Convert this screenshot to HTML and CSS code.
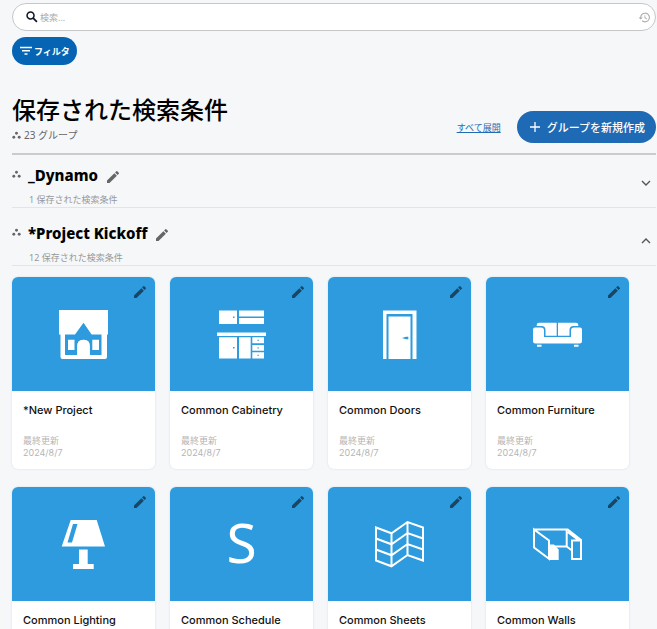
FILE: index.html
```html
<!DOCTYPE html>
<html lang="ja">
<head>
<meta charset="utf-8">
<meta name="viewport" content="width=device-width, initial-scale=1">
<title>保存された検索条件</title>
<link rel="stylesheet" href="styles.css">
</head>
<body>
<svg class="sprite" aria-hidden="true">
  <symbol id="pencil" viewBox="0 0 24 24"><path d="M3 17.25V21h3.75L17.81 9.94l-3.75-3.75L3 17.25zM20.71 7.04a1 1 0 0 0 0-1.41l-2.34-2.34a1 1 0 0 0-1.41 0l-1.83 1.83 3.75 3.75 1.83-1.83z"/></symbol>
  <symbol id="dots" viewBox="0 0 10 10"><circle cx="5" cy="2.5" r="1.6"/><circle cx="2" cy="7" r="1.6"/><circle cx="8" cy="7" r="1.6"/></symbol>
</svg>
<main class="page">
  <form class="search" role="search">
    <label for="query" aria-label="検索"><svg class="search-icon" viewBox="0 0 24 24"><circle cx="9.5" cy="9.5" r="6" fill="none" stroke="currentColor" stroke-width="2.6"/><path d="M14 14l6.5 6.5" stroke="currentColor" stroke-width="3"/></svg></label>
    <input id="query" type="text" placeholder="検索...">
    <button class="icon-button" type="button" aria-label="履歴"><svg class="history-icon" viewBox="0 0 24 24"><path d="M13 3a9 9 0 0 0-9 9H1l3.9 3.9L9 12H6a7 7 0 1 1 2.06 4.94l-1.42 1.42A9 9 0 1 0 13 3zm-1 5v5l4.3 2.5.7-1.2-3.5-2.1V8z"/></svg></button>
  </form>
  <button class="filter" type="button"><svg class="filter-icon" viewBox="0 0 12 10"><path d="M0 1.5h12M2 4.8h8M4.5 8h3" stroke="currentColor" stroke-width="1.5"/></svg>フィルタ</button>

  <header class="heading">
    <div>
      <h1>保存された検索条件</h1>
      <p class="count"><svg class="dots"><use href="#dots"/></svg>23 グループ</p>
    </div>
    <div class="actions">
      <a class="expand" href="#groups">すべて展開</a>
      <button class="create" type="button"><svg class="plus" viewBox="0 0 10 10"><path d="M5 0v10M0 5h10" stroke="currentColor" stroke-width="1.3"/></svg>グループを新規作成</button>
    </div>
  </header>

  <div id="groups">
    <section class="group">
      <svg class="dots"><use href="#dots"/></svg>
      <div class="group-text">
        <div class="group-title"><h2>_Dynamo</h2><button class="icon-button" type="button" aria-label="編集"><svg class="pencil"><use href="#pencil"/></svg></button></div>
        <p>1 保存された検索条件</p>
      </div>
      <button class="icon-button toggle" type="button" aria-expanded="false" aria-label="展開"><svg class="chevron" viewBox="0 0 10 6"><path d="M1 1l4 4 4-4"/></svg></button>
    </section>
    <section class="group">
      <svg class="dots"><use href="#dots"/></svg>
      <div class="group-text">
        <div class="group-title"><h2>*Project Kickoff</h2><button class="icon-button" type="button" aria-label="編集"><svg class="pencil"><use href="#pencil"/></svg></button></div>
        <p>12 保存された検索条件</p>
      </div>
      <button class="icon-button toggle" type="button" aria-expanded="true" aria-label="折りたたむ"><svg class="chevron" viewBox="0 0 10 6"><path d="M1 5l4-4 4 4"/></svg></button>
    </section>

    <div class="cards">
      <article class="card">
        <div class="cover">
          <button class="icon-button edit" type="button" aria-label="編集"><svg class="pencil"><use href="#pencil"/></svg></button>
          <svg class="art" viewBox="0 0 49 49"><path fill-rule="evenodd" d="M0 0h49v24.5h-1V47q0 2-2 2H3.500q-2 0-2-2V24.500H0zM6 24.500V45h12.300V36q0-6.300 6.200-6.300t6.200 6.300v9H42.500V24.500H32.600L24.500 12.700 16 24.500z"/><path d="M18.300 44h12.400v5H18.300zM9 29.700h6.500V40H9zM33.300 29.700h6.700V40h-6.700z"/><path d="M18.300 45v-9q0-6.300 6.200-6.300t6.200 6.300v9z"/></svg>
        </div>
        <div class="info"><h3>*New Project</h3><p>最終更新</p><time datetime="2024-08-07">2024/8/7</time></div>
      </article>
      <article class="card">
        <div class="cover">
          <button class="icon-button edit" type="button" aria-label="編集"><svg class="pencil"><use href="#pencil"/></svg></button>
          <svg class="art" viewBox="0 0 49 49"><path d="M2 .5h18V14H2zM22 .5h25v6H22zM22 8h25v6H22zM0 22.500h49V26H0zM2 27.200h18v21.300H2zM22 27.200h11.700v21.300H22zM35.300 27.200H47v6.100H35.300zM35.300 35H47v5.700H35.300zM35.300 42.300H47v6.200H35.300z"/><path class="cut" d="M16 6.500h1.500V8H16zM16 37h1.500v1.500H16zM40.500 29.800h1.200V31h-1.200zM40.500 37.300h1.200v1.200h-1.200zM40.500 44.800h1.200V46h-1.200z"/></svg>
        </div>
        <div class="info"><h3>Common Cabinetry</h3><p>最終更新</p><time datetime="2024-08-07">2024/8/7</time></div>
      </article>
      <article class="card">
        <div class="cover">
          <button class="icon-button edit" type="button" aria-label="編集"><svg class="pencil"><use href="#pencil"/></svg></button>
          <svg class="art" viewBox="0 0 49 49"><path d="M8 .5h33.500V49h-4V4h-26v45H8zM13.500 6.500h22V49h-22z"/><path class="cut" d="M27 28l4-1.300h2.300v2.600H31z"/></svg>
        </div>
        <div class="info"><h3>Common Doors</h3><p>最終更新</p><time datetime="2024-08-07">2024/8/7</time></div>
      </article>
      <article class="card">
        <div class="cover">
          <button class="icon-button edit" type="button" aria-label="編集"><svg class="pencil"><use href="#pencil"/></svg></button>
          <svg class="art" viewBox="0 0 49 49"><path d="M0 19.500Q0 17.500 2 17.500h6q3 0 3 3V27h27v-6.500q0-3 3-3h6q2 0 2 2V31q0 2.500-2.500 2.500h-44Q0 33.500 0 31zM3.700 16v-1q0-2.300 2.300-2.300h17.700v13H12.500V20q0-4-4-4zM45.300 16v-1q0-2.300-2.300-2.300H25v13h11.500V20q0-4 4-4zM4 34.700h4.500v2H4zM41 34.700h4.500v2H41z"/></svg>
        </div>
        <div class="info"><h3>Common Furniture</h3><p>最終更新</p><time datetime="2024-08-07">2024/8/7</time></div>
      </article>
      <article class="card">
        <div class="cover">
          <button class="icon-button edit" type="button" aria-label="編集"><svg class="pencil"><use href="#pencil"/></svg></button>
          <svg class="art" viewBox="0 0 49 49"><path d="M11.700 0h26L46 26.500H2.700zM20 29.500h8.700V44h6v5H14v-5h6z"/><path class="cut" d="M14 4h4.500L13 22.500H8.500z"/></svg>
        </div>
        <div class="info"><h3>Common Lighting</h3><p>最終更新</p><time datetime="2024-08-07">2024/8/7</time></div>
      </article>
      <article class="card">
        <div class="cover">
          <button class="icon-button edit" type="button" aria-label="編集"><svg class="pencil"><use href="#pencil"/></svg></button>
          <span class="letter">S</span>
        </div>
        <div class="info"><h3>Common Schedule</h3><p>最終更新</p><time datetime="2024-08-07">2024/8/7</time></div>
      </article>
      <article class="card">
        <div class="cover">
          <button class="icon-button edit" type="button" aria-label="編集"><svg class="pencil"><use href="#pencil"/></svg></button>
          <svg class="art line" viewBox="0 0 49 49"><path d="M1 7.500l15.500 5.800L32.500 2 48 7.500v33L32.500 35l-16 11.300L1 40.500zM16.500 13.300v33M32.500 2v33M1 18.500l15.500 5.800L32.500 13 48 18.500M1 29.500l15.500 5.800L32.500 24 48 29.500"/></svg>
        </div>
        <div class="info"><h3>Common Sheets</h3><p>最終更新</p><time datetime="2024-08-07">2024/8/7</time></div>
      </article>
      <article class="card">
        <div class="cover">
          <button class="icon-button edit" type="button" aria-label="編集"><svg class="pencil"><use href="#pencil"/></svg></button>
          <svg class="art line" viewBox="0 0 49 49"><path d="M1 9.500h33.700L48 20v19h-9V20.500h9M1 9.500l15 11v18.300L1 27.500zM16 26.500h17.700v-17M33.700 26.500l5.300 4M34.700 12L46 20.500"/><path class="solid" d="M16 24.500h5l4.700 5V40H16z"/></svg>
        </div>
        <div class="info"><h3>Common Walls</h3><p>最終更新</p><time datetime="2024-08-07">2024/8/7</time></div>
      </article>
    </div>
  </div>
</main>
</body>
</html>
```
FILE: styles.css
```css
* { box-sizing: border-box; }
body {
  margin: 0;
  background: #f5f7f9;
  color: #000;
  font-family: "Noto Sans", "Noto Sans CJK JP", sans-serif;
  font-size: 9px;
}
h1, h2, h3, p { margin: 0; }
button, input { font: inherit; }
button { border: 0; cursor: pointer; }
svg { display: block; flex: none; fill: currentColor; }
.sprite { position: absolute; width: 0; height: 0; }
.page { padding: 3px 1px 0 12px; }
.icon-button { display: flex; padding: 0; background: none; color: inherit; }
.pencil { width: 16px; height: 16px; }
.dots { width: 9px; height: 9px; color: #666; }

.search {
  display: flex;
  align-items: center;
  gap: 1px;
  height: 28px;
  padding: 0 4px 0 12px;
  border: 1px solid #c5c7c9;
  border-radius: 14px;
  background: #fff;
}
.search-icon { width: 14px; height: 14px; color: #101828; }
.search input { flex: 1; min-width: 0; padding: 0; border: 0; outline: 0; background: none; }
.search input::placeholder { color: #aaa; }
.history-icon { width: 13px; height: 13px; color: #aaa; }

.filter {
  display: flex;
  align-items: center;
  gap: 2px;
  height: 28px;
  margin-top: 6px;
  padding: 0 7px 0 8px;
  border-radius: 14px;
  background: #0564b4;
  color: #fff;
  font-weight: 700;
}
.filter-icon { width: 12px; height: 10px; }

.heading {
  display: flex;
  justify-content: space-between;
  align-items: flex-end;
  margin-top: 28px;
  padding-bottom: 10px;
  border-bottom: 2px solid #c9cccf;
}
h1 { font-size: 24px; font-weight: 500; line-height: 34px; }
.count { display: flex; align-items: center; gap: 3px; color: #666; font-size: 10px; line-height: 16px; }
.actions { display: flex; align-items: center; gap: 16px; }
.expand { color: #1f6cb5; }
.create {
  display: flex;
  align-items: center;
  gap: 7px;
  height: 32px;
  padding: 0 11px 0 13px;
  border-radius: 16px;
  background: #1f6ab5;
  color: #fff;
  font-size: 11px;
  font-weight: 500;
}
.plus { width: 10px; height: 10px; }

.group { display: flex; height: 58px; border-bottom: 1px solid #e2e4e7; }
.group:first-child { height: 53px; }
.group:first-child .group-text { padding-top: 8px; }
.group .dots { margin-top: 20px; }
.group:first-child .dots { margin-top: 15px; }
.group-text { flex: 1; padding: 13px 0 0 7px; }
.group-title { display: flex; align-items: flex-end; gap: 7px; color: #666; }
.group-title .icon-button { padding-bottom: 2px; }
h2 { color: #000; font-size: 15px; font-weight: 800; line-height: 24px; }
.group-text p { padding-left: 1px; color: #999; line-height: 12px; margin-top: 7px; }
.toggle { align-items: center; padding: 8px 5px 0; }
.group:first-child .toggle { padding-top: 4px; }
.chevron { width: 10px; height: 6px; fill: none; stroke: #555; stroke-width: 1.4; }

.cards { display: grid; grid-template-columns: repeat(auto-fill, 143px); gap: 18px 15px; padding: 11px 0; }
.card { overflow: hidden; border-radius: 6px; background: #fff; box-shadow: 0 0 2px #d5dae0; }
.cover {
  position: relative;
  display: flex;
  align-items: center;
  justify-content: center;
  height: 114px;
  background: #2d9bdd;
  color: #fff;
}
.edit { position: absolute; top: 7px; right: 7px; color: #1a4663; }
.art { width: 49px; height: 49px; }
.cut { fill: #2d9bdd; }
.line { fill: none; stroke: currentColor; stroke-width: 2; }
.solid { fill: currentColor; stroke: none; }
.letter { padding-bottom: 4px; font-size: 55px; line-height: 60px; }
.info { padding: 11px 11px 10px; color: #b5b5b5; line-height: 12px; }
h3 { margin-bottom: 17px; color: #111; font-family: Inter, sans-serif; font-size: 11px; font-weight: 500; line-height: 16px; }
time { display: block; font-family: Inter, sans-serif; }
```
